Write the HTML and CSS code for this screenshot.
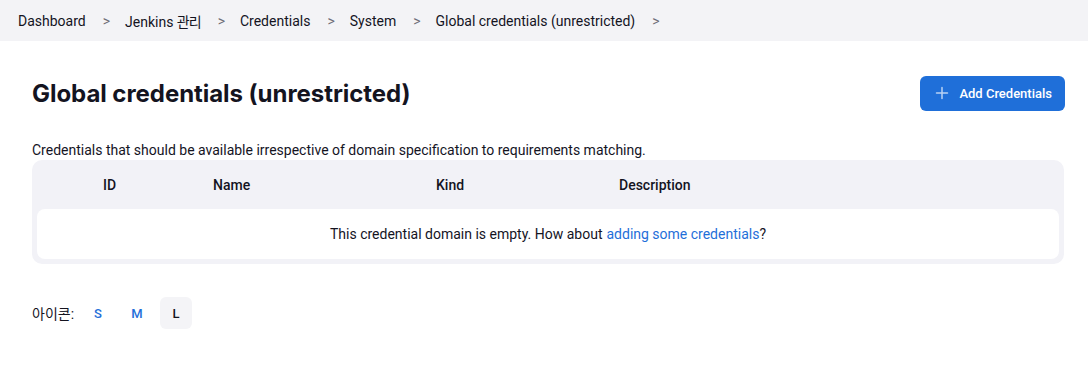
FILE: index.html
```html
<!DOCTYPE html>
<html lang="ko">
<head>
  <meta charset="UTF-8" />
  <meta name="viewport" content="width=device-width, initial-scale=1.0"/>
  <title>Global credentials (unrestricted) - Jenkins</title>
  <link rel="stylesheet" href="styles.css">
</head>
<body>

<!-- Breadcrumb -->
<nav class="breadcrumbs">
  <a href="#">Dashboard</a><span class="sep">&gt;</span>
  <a href="#">Jenkins <span class="ko">관리</span></a><span class="sep">&gt;</span>
  <a href="#">Credentials</a><span class="sep">&gt;</span>
  <a href="#">System</a><span class="sep">&gt;</span>
  <a href="#">Global credentials (unrestricted)</a><span class="sep">&gt;</span>
</nav>

<main class="content">
  <div class="app-bar">
    <h1>Global credentials (unrestricted)</h1>
    <a class="btn-primary" href="#">
      <svg width="14" height="14" viewBox="0 0 14 14" fill="none" stroke="currentColor" stroke-width="1.5" stroke-linecap="round">
        <path d="M7 1.5v11M1.5 7h11"/>
      </svg>
      Add Credentials
    </a>
  </div>

  <p class="desc">Credentials that should be available irrespective of domain specification to requirements matching.</p>

  <div class="table">
    <div class="table-head">
      <span></span>
      <span>ID</span>
      <span>Name</span>
      <span>Kind</span>
      <span>Description</span>
    </div>
    <div class="table-row">
      This credential domain is empty. How about <a href="#">adding some credentials</a>?
    </div>
  </div>

  <div class="icon-size">
    <span class="label">아이콘:</span>
    <a href="#" class="size">S</a>
    <a href="#" class="size">M</a>
    <span class="size active">L</span>
  </div>
</main>

</body>
</html>
```

FILE: styles.css
```css
body {
  font-family: Roboto, "Noto Sans CJK KR", sans-serif;
  margin: 0;
  background: #fff;
  color: #14141f;
  font-size: 14px;
}
a {
  text-decoration: none;
  color: inherit;
}
.breadcrumbs {
  display: flex;
  align-items: center;
  height: 41px;
  padding: 0 0 0 18px;
  background: #f3f3f6;
  font-size: 14px;
}
.breadcrumbs .sep {
  color: #6e6e78;
  margin: 0 15px 0 17px;
}
.ko {
  letter-spacing: -1px;
}
.content {
  padding: 0 23px 0 32px;
}
.app-bar {
  display: flex;
  align-items: center;
  justify-content: space-between;
  margin-top: 34px;
  height: 36px;
}
h1 {
  margin: 0;
  font-family: Inter, sans-serif;
  font-size: 24px;
  font-weight: 700;
  letter-spacing: -0.05px;
}
.btn-primary {
  display: flex;
  align-items: center;
  gap: 10px;
  height: 35px;
  padding: 0 13px 0 15px;
  background: #1f6fd9;
  color: #fff;
  border-radius: 6px;
  font-size: 13px;
  font-weight: 500;
}
.btn-primary svg {
  color: #b9d2f3;
}
.desc {
  margin: 30px 0 0;
  line-height: 18px;
  color: #14141f;
}
.table {
  margin-top: 1px;
  margin-right: 1px;
  background: #f2f2f7;
  border-radius: 10px;
  padding: 0 5px 5px;
}
.table-head {
  display: grid;
  grid-template-columns: 66px 110px 223px 183px 1fr;
  height: 49px;
  align-items: center;
  font-weight: 500;
}
.table-row {
  background: #fff;
  border-radius: 8px;
  height: 50px;
  display: flex;
  align-items: center;
  justify-content: center;
}
.table-row a {
  color: #1f6fd9;
  margin-left: 4px;
}
.icon-size {
  display: flex;
  align-items: center;
  margin-top: 33px;
  height: 32px;
}
.icon-size .label {
  margin-right: 8px;
}
.size {
  width: 32px;
  height: 32px;
  display: flex;
  align-items: center;
  justify-content: center;
  font-size: 13px;
  font-weight: 500;
  color: #1f6fd9;
  border-radius: 6px;
  margin-right: 7px;
}
.size.active {
  background: #f4f4f7;
  color: #14141f;
}
```
